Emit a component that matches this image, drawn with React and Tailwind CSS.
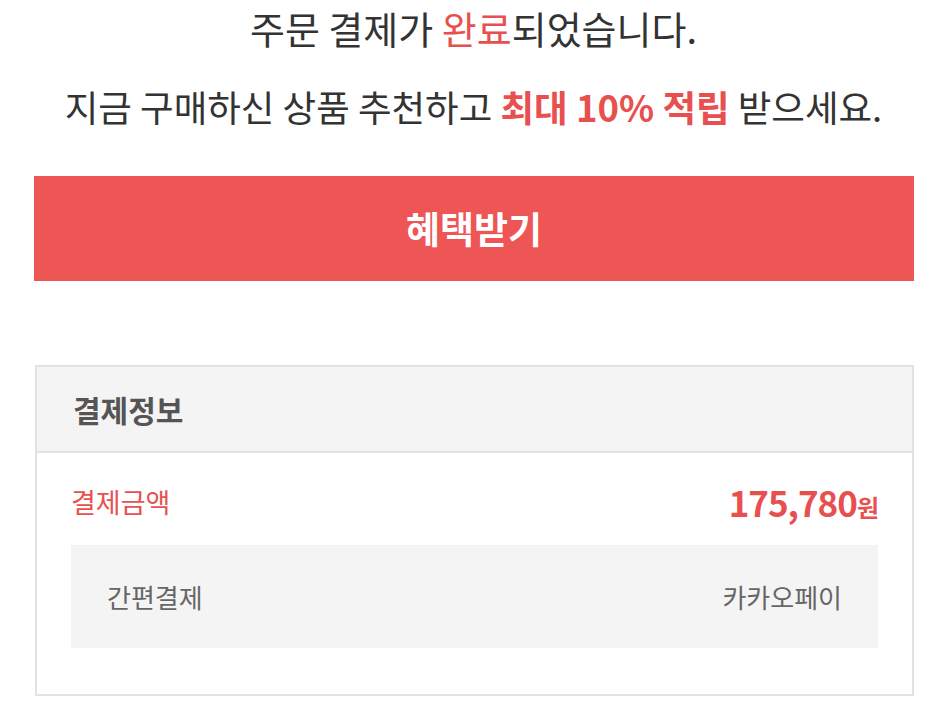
import React from 'react';

export default function App() {
    return (
        <div className="w-[947px] h-[703px] bg-white overflow-hidden font-['Noto_Sans_CJK_KR','Noto_Sans',sans-serif]">
            {/* 안내 문구 */}
            <div className="text-center">
                <h1 className="text-[38px] leading-[56px] text-[#333]">
                    주문 결제가 <span className="text-[#e85050]">완료</span>되었습니다.
                </h1>
                <p className="mt-[28px] text-[36.5px] leading-[46px] text-[#333]">
                    지금 구매하신 상품 추천하고 <span className="font-bold text-[#e85050]">최대 10% 적립</span> 받으세요.
                </p>
            </div>

            <div className="ml-[34px] mr-[33px] mt-[46px]">
                <button className="w-full h-[105px] bg-[#ee5555] text-white text-[37px] font-bold">
                    혜택받기
                </button>
            </div>

            {/* 결제정보 */}
            <div className="ml-[35px] mr-[33px] mt-[84px] border-2 border-[#e2e2e2]">
                <div className="h-[86px] bg-[#f4f4f4] border-b-2 border-[#e2e2e2] flex items-center px-[36px]">
                    <h2 className="text-[30px] font-bold text-[#555]">결제정보</h2>
                </div>
                <div className="px-[34px] pb-[46px]">
                    <div className="h-[92px] pt-[6px] flex items-center justify-between">
                        <span className="text-[27px] text-[#e85050]">결제금액</span>
                        <span className="text-[#e85050] font-bold tracking-[-1px]">
                            <span className="text-[35px]">175,780</span>
                            <span className="text-[24px]">원</span>
                        </span>
                    </div>
                    <div className="h-[103px] bg-[#f4f4f4] flex items-center justify-between px-[36px]">
                        <span className="text-[26px] text-[#666]">간편결제</span>
                        <span className="text-[26px] text-[#666]">카카오페이</span>
                    </div>
                </div>
            </div>
        </div>
    );
}
